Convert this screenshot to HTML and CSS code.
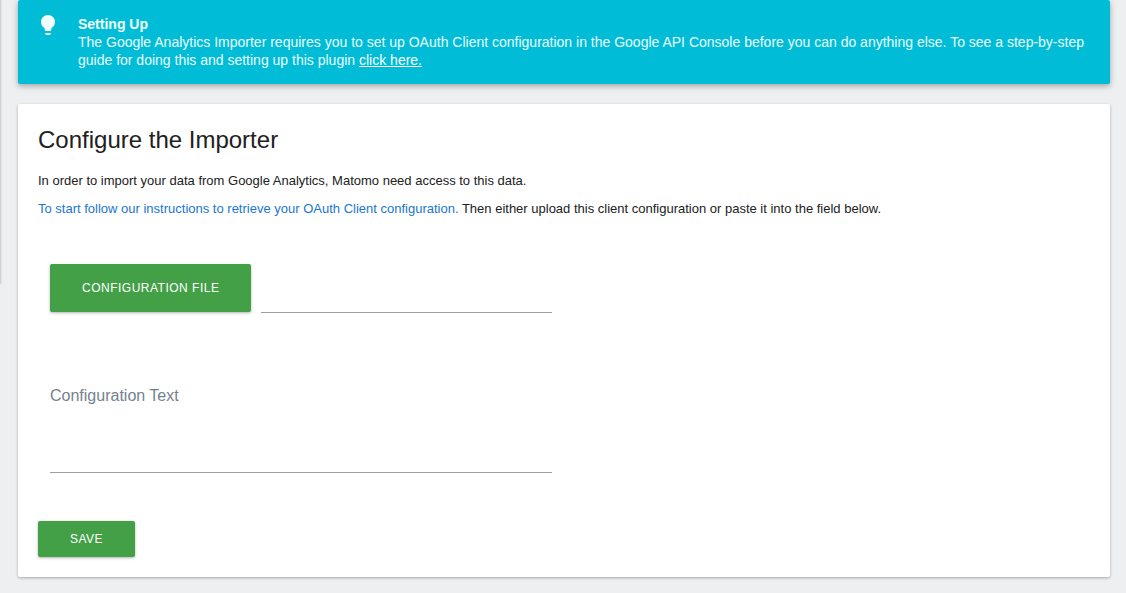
FILE: index.html
```html
<!DOCTYPE html>
<html lang="en">
<head>
<meta charset="utf-8">
<title>Google Analytics Importer</title>
<link rel="stylesheet" href="styles.css">
</head>
<body>
<div class="page">
  <aside class="sidebar"></aside>
  <main class="content">
    <section class="notification">
      <svg class="notification-icon" viewBox="0 0 24 24" aria-hidden="true"><path d="M9 20h6c0 1.200-1 2-2 2h-2c-1 0-2-.8-2-2zM12 2C8.140 2 5 5 5 9c0 2.600 1.300 4.500 3.300 5.900.4.300.5 1 .5 1.600v.5c0 .55.45 1 1 1h4.400c.55 0 1-.45 1-1v-.5c0-.6.1-1.300.5-1.600C17.700 13.500 19 11.600 19 9c0-4-3.140-7-7-7z"/></svg>
      <div class="notification-body">
        <strong>Setting Up</strong>
        <p>The Google Analytics Importer requires you to set up OAuth Client configuration in the Google API Console before you can do anything else. To see a step-by-step guide for doing this and setting up this plugin <a href="#guide">click here.</a></p>
      </div>
    </section>
    <section class="card">
      <h2>Configure the Importer</h2>
      <p class="intro">In order to import your data from Google Analytics, Matomo need access to this data.</p>
      <p class="intro"><a href="#instructions">To start follow our instructions to retrieve your OAuth Client configuration.</a> Then either upload this client configuration or paste it into the field below.</p>
      <form class="form">
        <div class="file-field">
          <button class="button button-large" type="button">CONFIGURATION FILE</button>
          <input class="file-path" type="text" aria-label="Configuration file">
        </div>
        <div class="text-field">
          <label for="config-text">Configuration Text</label>
          <textarea id="config-text"></textarea>
        </div>
        <button class="button" type="button">SAVE</button>
      </form>
    </section>
  </main>
</div>
</body>
</html>
```
FILE: styles.css
```css
* {
  box-sizing: border-box;
}

body {
  margin: 0;
  background: #eeeff1;
  color: #212121;
  font-family: "Liberation Sans", Arial, sans-serif;
  font-size: 13px;
}

p,
h2 {
  margin: 0;
}

.page {
  display: flex;
  align-items: flex-start;
}

.sidebar {
  width: 0;
  height: 283px;
  box-shadow: 0 0 2px 1px rgba(0, 0, 0, 0.18);
}

.content {
  flex: 1;
  min-width: 0;
  padding: 0 16px 16px 18px;
}

.notification {
  display: flex;
  gap: 18px;
  padding: 15px 20px;
  border-radius: 2px;
  background: #00bcd7;
  color: #e8fdff;
  font-size: 14px;
  line-height: 18px;
  box-shadow: 0 2px 5px rgba(0, 0, 0, 0.22), 0 2px 8px rgba(0, 0, 0, 0.12);
}

.notification-icon {
  flex: none;
  width: 24px;
  height: 24px;
  margin: -2px 0 0 -2px;
  fill: #f2ffff;
}

.notification-body strong {
  color: #f2ffff;
}

.notification a {
  color: #ffffff;
}

.card {
  margin-top: 20px;
  padding: 20px;
  border-radius: 2px;
  background: #ffffff;
  box-shadow: 0 1px 3px rgba(0, 0, 0, 0.3);
}

.card h2 {
  margin-bottom: 14px;
  font-size: 24px;
  font-weight: 400;
  line-height: 32px;
}

.intro {
  margin-bottom: 6px;
  line-height: 22px;
}

.intro a {
  color: #1976d2;
  text-decoration: none;
}

.form {
  padding-top: 38px;
}

.file-field,
.text-field {
  width: 50%;
  padding: 0 12px;
}

.file-field {
  display: flex;
  gap: 10px;
}

.button {
  height: 36px;
  padding: 0 32px;
  border: 0;
  border-radius: 2px;
  background: #43a047;
  color: #ffffff;
  font-family: inherit;
  font-size: 12px;
  letter-spacing: 0.5px;
  box-shadow: 0 1px 3px rgba(0, 0, 0, 0.3);
}

.button-large {
  flex: none;
  height: 48px;
}

.file-path,
.text-field textarea {
  border: 0;
  border-bottom: 1px solid #9e9e9e;
  outline: 0;
  background: transparent;
  font: inherit;
}

.file-path {
  flex: 1;
  min-width: 0;
  height: 49px;
  padding: 0;
}

.text-field {
  margin: 72px 0 48px;
}

.text-field label {
  display: block;
  color: #74828f;
  font-size: 16px;
  line-height: 22px;
}

.text-field textarea {
  display: block;
  width: 100%;
  height: 66px;
  padding: 0;
  resize: none;
}
```
